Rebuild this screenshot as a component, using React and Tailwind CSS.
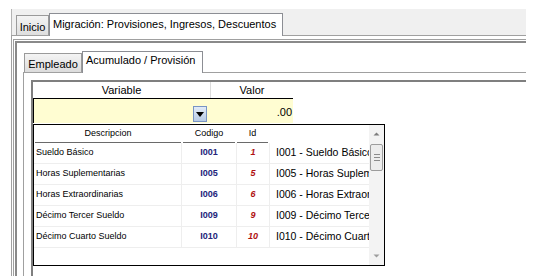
import React from "react";

const rows = [
  ["Sueldo Básico", "I001", "1", "I001 - Sueldo Básico"],
  ["Horas Suplementarias", "I005", "5", "I005 - Horas Suplementarias"],
  ["Horas Extraordinarias", "I006", "6", "I006 - Horas Extraordinarias"],
  ["Décimo Tercer Sueldo", "I009", "9", "I009 - Décimo Tercer Sueldo"],
  ["Décimo Cuarto Sueldo", "I010", "10", "I010 - Décimo Cuarto Sueldo"],
];

function Dropdown() {
  return (
    <div className="absolute left-0 top-[42px] w-[352px] h-[142px] border border-black bg-white flex z-10">
      <div className="flex flex-col w-[335px]">
        <div className="flex h-[18px] text-[9px] text-black">
          <div className="w-[146px] mx-[1px] border-b border-[#6a6a6a] flex items-center justify-center">Descripcion</div>
          <div className="w-[52px] mx-[1px] border-b border-[#6a6a6a] flex items-center justify-center">Codigo</div>
          <div className="w-[31px] mx-[1px] border-b border-[#6a6a6a] flex items-center justify-center">Id</div>
          <div className="flex-1" />
        </div>
        {rows.map((r) => (
          <div key={r[1]} className="flex h-[21px] border-b border-[#eeeeee]">
            <div className="w-[148px] border-r border-[#eeeeee] flex items-center pl-[2px] text-[9px] text-black whitespace-nowrap">{r[0]}</div>
            <div className="w-[55px] border-r border-[#eeeeee] flex items-center justify-center text-[9px] font-bold text-[#24247a]">{r[1]}</div>
            <div className="w-[33px] border-r border-[#eeeeee] flex items-center justify-center text-[9px] font-bold italic text-[#b01010]">{r[2]}</div>
            <div className="flex-1 overflow-hidden flex items-center pl-[6px] text-[10.5px] text-black whitespace-nowrap">{r[3]}</div>
          </div>
        ))}
      </div>
      <div className="w-[15px] bg-[#f3f3f3] flex flex-col items-center">
        <svg width="15" height="17" viewBox="0 0 15 17" className="mt-[1px]">
          <path d="M4.5 9.5 L7.5 6.5 L10.5 9.5 Z" fill="#7d7d7d" />
        </svg>
        <div className="mt-[1px] w-[13px] h-[27px] border border-[#9c9c9c] rounded-[2px] bg-[#ececec] flex flex-col items-center justify-center gap-[2px]">
          <div className="w-[6px] h-px bg-[#8a8a8a]" />
          <div className="w-[6px] h-px bg-[#8a8a8a]" />
          <div className="w-[6px] h-px bg-[#8a8a8a]" />
        </div>
        <div className="flex-1" />
        <svg width="15" height="17" viewBox="0 0 15 17" className="mb-[1px]">
          <path d="M4.5 7.5 L7.5 10.5 L10.5 7.5 Z" fill="#9d9d9d" />
        </svg>
      </div>
    </div>
  );
}

export default function App() {
  return (
    <div
      className="relative w-[556px] h-[276px] overflow-hidden bg-white pt-[9px] pl-[11px] text-black"
      style={{ fontFamily: "'Liberation Sans', Arial, sans-serif" }}
    >
      <div className="w-[515px]">
        {/* Outer tab strip */}
        <div className="h-[26px] bg-[#f0f0f0] border-l border-[#b4b4b4] flex items-end pl-[4px]">
          <div className="w-[33px] h-[20px] border border-b-0 border-[#9a9a9a] bg-gradient-to-b from-[#f4f4f4] to-[#dedede] flex items-center justify-center text-[11px] pt-[3px]">
            Inicio
          </div>
          <div className="relative z-10 -mb-px w-[234px] h-[23px] border border-b-0 border-[#8c8e94] bg-white flex items-center pl-[3px] text-[11px] pb-[2px]">
            Migración: Provisiones, Ingresos, Descuentos
          </div>
        </div>
        {/* Outer panel */}
        <div className="border-t border-l border-[#a0a0a0] pt-[3px] pl-[1px]">
          <div className="border-t border-l border-[#a0a0a0] pt-[1px] pl-[1px]">
            <div className="border-t-2 border-l-2 border-[#8a8a8a] h-[240px] pl-[6px]">
              {/* Inner tab strip */}
              <div className="h-[29px] flex items-end pl-[1px]">
                <div className="w-[58px] h-[19px] border border-b-0 border-[#9a9a9a] bg-gradient-to-b from-[#f4f4f4] to-[#dcdcdc] flex items-center justify-center text-[11px] pt-[2px]">
                  Empleado
                </div>
                <div className="relative z-10 -mb-px w-[121px] h-[22px] border border-b-0 border-[#8c8e94] bg-white flex items-center pl-[3px] text-[11px] pb-[4px]">
                  Acumulado / Provisión
                </div>
              </div>
              {/* Inner panel */}
              <div className="border-t border-l border-[#a0a0a0] pt-[7px] pl-[7px] h-[220px]">
                <div className="relative border-t-2 border-l-2 border-[#7f7f7f] h-[220px]">
                  <div className="w-[260px] flex h-[17px] border-b border-black text-[11px]">
                    <div className="w-[177px] flex items-center justify-center pt-px">Variable</div>
                    <div className="flex-1 border-l border-[#dcdcdc] flex items-center justify-center pt-px">Valor</div>
                  </div>
                  <div className="w-[260px] h-[24px] bg-[#fffdd2] border-l border-black flex items-end">
                    <div className="w-[176px] h-full flex items-end justify-end pr-[3px] pb-[1px]">
                      <div className="w-[14px] h-[16px] border border-[#7894c4] bg-gradient-to-b from-[#e2ebf7] to-[#b7cbe6] flex items-center justify-center">
                        <svg width="8" height="5" viewBox="0 0 8 5">
                          <path d="M0 0 L8 0 L4 5 Z" fill="#000" />
                        </svg>
                      </div>
                    </div>
                    <div className="flex-1 h-full flex items-end justify-end pb-[3px] pr-[1px] text-[11px]">.00</div>
                  </div>
                  <Dropdown />
                </div>
              </div>
            </div>
          </div>
        </div>
      </div>
    </div>
  );
}
